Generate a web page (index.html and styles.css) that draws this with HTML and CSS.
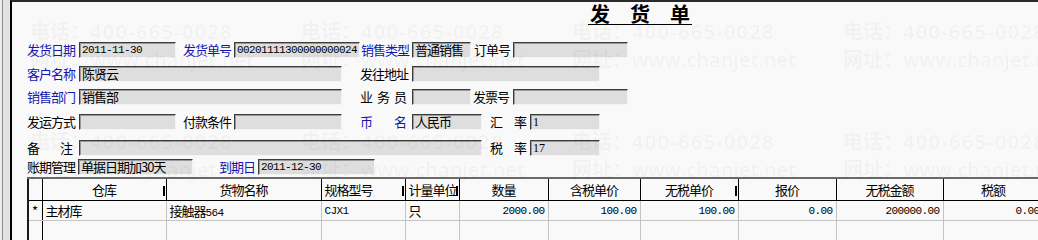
FILE: index.html
```html
<!DOCTYPE html>
<html lang="zh-CN">
<head>
    <meta charset="UTF-8">
    <title>发货单</title>
    <link rel="stylesheet" href="styles.css">
</head>
<body>
<div class="screen">
    <div class="side"></div>

    <div class="frame">
        <div class="title"><span>发　货　单</span></div>

        <!-- header fields -->
        <div class="form">
            <div class="row">
                <label class="lbl key w52">发货日期</label>
                <div class="box w97 num">2011-11-30</div>
                <label class="lbl key w58 p7">发货单号</label>
                <div class="box w126 num">00201111300000000024</div>
                <label class="lbl key w52 p1">销售类型</label>
                <div class="box w59">普通销售</div>
                <label class="lbl w42 p3">订单号</label>
                <div class="box w115"></div>
            </div>
            <div class="row">
                <label class="lbl key w52">客户名称</label>
                <div class="box w263">陈贤云</div>
                <label class="lbl w70 p18">发往地址</label>
                <div class="box w188"></div>
            </div>
            <div class="row">
                <label class="lbl key w52">销售部门</label>
                <div class="box w263">销售部</div>
                <label class="lbl w70 p18"><span class="spread s47">业 务 员</span></label>
                <div class="box w59"></div>
                <label class="lbl w42 p2">发票号</label>
                <div class="box w115"></div>
            </div>
            <div class="row">
                <label class="lbl w52">发运方式</label>
                <div class="box w97"></div>
                <label class="lbl w58 p7">付款条件</label>
                <div class="box w108"></div>
                <label class="lbl key w70 p18"><span class="spread s47">币 名</span></label>
                <div class="box w70">人民币</div>
                <label class="lbl w48 p8"><span class="spread s37">汇 率</span></label>
                <div class="box w70 serif">1</div>
            </div>
            <div class="row">
                <label class="lbl w52"><span class="spread s46">备 注</span></label>
                <div class="box w403"></div>
                <label class="lbl w48 p8"><span class="spread s37">税 率</span></label>
                <div class="box w70 serif">17</div>
            </div>
            <div class="row">
                <label class="lbl w51">账期管理</label>
                <div class="box w115">单据日期加30天</div>
                <label class="lbl key w65 p26">到期日</label>
                <div class="box w117 num">2011-12-30</div>
            </div>
        </div>

        <!-- detail lines -->
        <table class="grid">
            <colgroup>
                <col style="width:14px">
                <col style="width:124px">
                <col style="width:155px">
                <col style="width:84px">
                <col style="width:54px">
                <col style="width:89px">
                <col style="width:92px">
                <col style="width:98px">
                <col style="width:98px">
                <col style="width:107px">
                <col style="width:100px">
            </colgroup>
            <thead>
                <tr>
                    <th class="sel"></th>
                    <th class="grip">仓库</th>
                    <th>货物名称</th>
                    <th class="left grip">规格型号</th>
                    <th class="left grip">计量单位</th>
                    <th>数量</th>
                    <th>含税单价</th>
                    <th class="grip">无税单价</th>
                    <th>报价</th>
                    <th>无税金额</th>
                    <th class="grip">税额</th>
                </tr>
            </thead>
            <tbody>
                <tr>
                    <td class="sel">*</td>
                    <td>主材库</td>
                    <td>接触器<span class="num">564</span></td>
                    <td class="num">CJX1</td>
                    <td>只</td>
                    <td class="num right">2000.00</td>
                    <td class="num right">100.00</td>
                    <td class="num right">100.00</td>
                    <td class="num right">0.00</td>
                    <td class="num right">200000.00</td>
                    <td class="num right">0.00</td>
                </tr>
                <tr>
                    <td class="sel"></td><td></td><td></td><td></td><td></td><td></td><td></td><td></td><td></td><td></td><td></td>
                </tr>
                <tr>
                    <td class="sel"></td><td></td><td></td><td></td><td></td><td></td><td></td><td></td><td></td><td></td><td></td>
                </tr>
            </tbody>
        </table>
    </div>

    <!-- watermark printed over the whole form -->
    <div class="watermark">
        <div class="mark"><div>电话：<span class="tel">400-665-0028</span></div><div>网址：www.chanjet.net</div></div>
        <div class="mark"><div>电话：<span class="tel">400-665-0028</span></div><div>网址：www.chanjet.net</div></div>
        <div class="mark"><div>电话：<span class="tel">400-665-0028</span></div><div>网址：www.chanjet.net</div></div>
        <div class="mark"><div>电话：<span class="tel">400-665-0028</span></div><div>网址：www.chanjet.net</div></div>
        <div class="mark"><div>电话：<span class="tel">400-665-0028</span></div><div>网址：www.chanjet.net</div></div>
        <div class="mark"><div>电话：<span class="tel">400-665-0028</span></div><div>网址：www.chanjet.net</div></div>
        <div class="mark"><div>电话：<span class="tel">400-665-0028</span></div><div>网址：www.chanjet.net</div></div>
        <div class="mark"><div>电话：<span class="tel">400-665-0028</span></div><div>网址：www.chanjet.net</div></div>
    </div>
</div>
</body>
</html>
```

FILE: styles.css
```css
body {
    margin: 0;
    background: #ececec;
    font-family: "Noto Sans CJK SC", sans-serif;
    font-size: 13px;
    letter-spacing: -1px;
    color: #000;
    overflow: hidden;
}

.screen {
    position: relative;
    display: flex;
    width: 1038px;
    height: 240px;
    overflow: hidden;
}

.side {
    width: 7px;
    margin-left: 2px;
    border-left: 1px solid #8c8c8c;
    background: #e2e2e2;
}

.frame {
    flex: 1;
    min-width: 0;
    border-left: 2px solid #000;
    border-top: 2px solid #2a2a2a;
    background: #f9f9f9;
    padding-left: 15px;
}

/* title */
.title {
    height: 40px;
    padding-left: 561px;
}

.title span {
    display: inline-block;
    padding: 0 2px;
    margin-top: 2px;
    font-size: 20px;
    font-weight: bold;
    letter-spacing: 0;
    line-height: 20px;
    border-bottom: 1px solid #000;
}

/* form */
.form {
    display: grid;
    grid-template-rows: 24px 23px 25px 26px 19px 18px;
}

.row {
    display: flex;
    align-items: center;
    height: 16px;
}

.lbl {
    flex: none;
    box-sizing: border-box;
    white-space: nowrap;
    line-height: 16px;
}

.key {
    color: #1616b0;
}

.spread {
    display: inline-block;
    text-align: justify;
    text-align-last: justify;
    letter-spacing: 0;
}

.s46 { width: 46px; }
.s47 { width: 47px; }
.s37 { width: 37px; }

.box {
    flex: none;
    box-sizing: border-box;
    height: 16px;
    padding-left: 2px;
    background: #dedede;
    border: 1px solid;
    border-color: #3c3c3c #f4f4f4 #f4f4f4 #3c3c3c;
    box-shadow: inset 1px 1px 0 #9a9a9a;
    line-height: 14px;
    white-space: nowrap;
    overflow: hidden;
}

.num {
    font-family: "Liberation Mono", monospace;
    font-size: 11px;
    letter-spacing: -0.6px;
}

.serif {
    font-family: "Liberation Serif", serif;
    font-size: 12px;
    letter-spacing: 0;
}

.w42 { width: 42px; }
.w48 { width: 48px; }
.w51 { width: 51px; }
.w52 { width: 52px; }
.w58 { width: 58px; }
.w59 { width: 59px; }
.w65 { width: 65px; }
.w70 { width: 70px; }
.w97 { width: 97px; }
.w108 { width: 108px; }
.w115 { width: 115px; }
.w117 { width: 117px; }
.w126 { width: 126px; }
.w188 { width: 188px; }
.w263 { width: 263px; }
.w403 { width: 403px; }

.p1 { padding-left: 1px; }
.p2 { padding-left: 2px; }
.p3 { padding-left: 3px; }
.p7 { padding-left: 7px; }
.p8 { padding-left: 8px; }
.p18 { padding-left: 18px; }
.p26 { padding-left: 26px; }

/* detail grid */
.grid {
    border-collapse: collapse;
    table-layout: fixed;
    width: 1015px;
    border-left: 2px solid #1a1a1a;
}

.grid th {
    position: relative;
    height: 21px;
    padding: 0;
    font-weight: normal;
    border-top: 2px solid #6a6a6a;
    border-bottom: 1px solid #000;
    border-right: 1px solid #000;
    white-space: nowrap;
}

.grid th.left {
    text-align: left;
    padding-left: 3px;
}

.grid th.grip::after {
    content: "";
    position: absolute;
    right: 1px;
    top: 7px;
    width: 2px;
    height: 10px;
    background: #000;
}

.grid td {
    height: 19px;
    padding: 0 3px;
    border-bottom: 1px solid #c4c4c4;
    border-right: 1px solid #c4c4c4;
    white-space: nowrap;
    overflow: hidden;
}

.grid td.num {
    font-size: 11px;
}

.grid .sel {
    padding: 0 0 0 3px;
    border-right: 1px solid #000;
}

.grid .right {
    text-align: right;
}

/* watermark */
.watermark {
    position: absolute;
    left: 30px;
    top: 18px;
    display: grid;
    grid-template-columns: repeat(4, 271px);
    grid-auto-rows: 110px;
    pointer-events: none;
    color: rgba(0, 0, 0, 0.04);
    font-family: "Open Sans", "Noto Sans CJK SC", sans-serif;
    font-size: 20px;
    font-weight: 600;
    letter-spacing: 0;
    line-height: 28px;
    white-space: nowrap;
}

.tel {
    letter-spacing: 1.3px;
}
```
